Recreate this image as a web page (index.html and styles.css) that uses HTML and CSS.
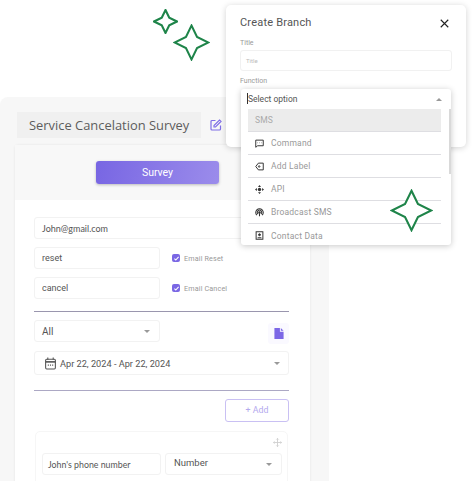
FILE: index.html
```html
<!DOCTYPE html>
<html lang="en">
<head>
    <meta charset="UTF-8">
    <title>Create Branch</title>
    <link rel="stylesheet" href="styles.css">
</head>
<body>
    <div id="stage">
        <!-- survey window -->
        <section class="survey_panel">
            <header class="survey_head">
                <h1>Service Cancelation Survey</h1>
                <svg class="edit_icon" viewBox="0 0 24 24" width="12" height="12" fill="none" stroke="#7f6ee6" stroke-width="2.4"><path d="M11 3H4a2 2 0 0 0-2 2v15a2 2 0 0 0 2 2h15a2 2 0 0 0 2-2v-7"/><path d="M19 2l3 3-11 11H8v-3z"/></svg>
            </header>
            <div class="survey_card">
                <div class="card_top"><a class="survey_btn" href="#">Survey</a></div>
                <div class="card_body">
                    <div class="field field_full poppins">John@gmail.com</div>
                    <div class="row">
                        <div class="field field_half">reset</div>
                        <label class="check"><span class="box"><svg viewBox="0 0 10 10" width="7" height="7" fill="none" stroke="#fff" stroke-width="1.6"><path d="M2 5.2l2 2 4-4.4"/></svg></span>Email Reset</label>
                    </div>
                    <div class="row">
                        <div class="field field_half">cancel</div>
                        <label class="check"><span class="box"><svg viewBox="0 0 10 10" width="7" height="7" fill="none" stroke="#fff" stroke-width="1.6"><path d="M2 5.2l2 2 4-4.4"/></svg></span>Email Cancel</label>
                    </div>
                    <hr class="line">
                    <div class="row row_between">
                        <div class="field field_half select_all">All<i class="caret"></i></div>
                        <div class="file_btn"><svg viewBox="0 0 20 24" fill="#7c67e6"><path d="M0 0h12v8h8v16H0zM14 0l6 6h-6z"/></svg></div>
                    </div>
                    <div class="field date_field">
                        <svg viewBox="0 0 24 24" width="13" height="13" fill="none" stroke="#555" stroke-width="2"><rect x="3" y="4" width="18" height="18" rx="2"/><path d="M3 9h18" stroke-width="3"/><path d="M7 1v4M17 1v4"/><path d="M7 15h2M11 15h2M15 15h2" /></svg>
                        <span>Apr 22, 2024 - Apr 22, 2024</span><i class="caret"></i>
                    </div>
                    <hr class="line line_2">
                    <div class="add_row"><a class="add_btn" href="#">+ Add</a></div>
                    <div class="sub_card">
                        <div class="move_row"><svg viewBox="0 0 24 24" width="9" height="9" fill="none" stroke="#cfcfcf" stroke-width="2.4"><path d="M12 1v22M1 12h22M9 4l3-3 3 3M9 20l3 3 3-3M4 9l-3 3 3 3M20 9l3 3-3 3"/></svg></div>
                        <div class="sub_row">
                            <div class="field phone_field poppins">John's phone number</div>
                            <div class="field number_field">Number<i class="caret"></i></div>
                        </div>
                    </div>
                </div>
            </div>
        </section>

        <!-- create branch modal -->
        <section class="modal">
            <header class="modal_head">
                <h2>Create Branch</h2>
                <svg viewBox="0 0 12 12" width="9" height="9" fill="none" stroke="#222" stroke-width="1.5"><path d="M1 1l10 10M11 1L1 11"/></svg>
            </header>
            <p class="modal_label">Title</p>
            <div class="modal_input">Title</div>
            <p class="modal_label label_fn">Function</p>
        </section>

        <!-- dropdown list -->
        <div class="dropdown">
            <div class="drop_head"><span class="cursor"></span>Select option<i class="caret caret_up"></i></div>
            <ul class="drop_list">
                <li class="on">SMS</li>
                <li><svg viewBox="0 0 24 24" width="9" height="9" fill="none" stroke="#333" stroke-width="2.6"><path d="M2 3h20v15H7l-5 4z"/><path d="M7 10h1M12 10h1M17 10h1"/></svg>Command</li>
                <li><svg viewBox="0 0 24 24" width="9" height="9" fill="none" stroke="#333" stroke-width="2.6"><path d="M2 12l7-9h13v18H9z"/><circle cx="11" cy="12" r="2"/></svg>Add Label</li>
                <li><svg viewBox="0 0 24 24" width="9" height="9" fill="#333"><path d="M12 0l4 5H8zM12 24l-4-5h8zM0 12l5-4v8zM24 12l-5 4V8z"/><circle cx="12" cy="12" r="4.5"/></svg>API</li>
                <li><svg viewBox="0 0 24 24" width="9" height="9" fill="none" stroke="#333" stroke-width="2.8"><path d="M5 19a10 10 0 1 1 14 0"/><path d="M8 16a6 6 0 1 1 8 0"/><circle cx="12" cy="12" r="2" fill="#333"/><path d="M12 14v8"/></svg>Broadcast SMS</li>
                <li class="last"><svg viewBox="0 0 24 24" width="9" height="9" fill="none" stroke="#333" stroke-width="2.6"><rect x="3" y="2" width="18" height="20"/><circle cx="12" cy="10" r="2.5" fill="#333"/><path d="M7 18h10" /></svg>Contact Data</li>
            </ul>
            <span class="scroll_thumb"></span>
        </div>

        <!-- stars -->
        <svg class="star star_1" viewBox="0 0 24 24" fill="#fff" stroke="#1e8449" stroke-width="2"><path d="M12 1l3.6 7.4L23 12l-7.4 3.6L12 23l-3.6-7.4L1 12l7.4-3.6z"/></svg>
        <svg class="star star_2" viewBox="0 0 24 24" fill="#fff" stroke="#1e8449" stroke-width="1.3"><path d="M12 1l3.6 7.4L23 12l-7.4 3.6L12 23l-3.6-7.4L1 12l7.4-3.6z"/></svg>
        <svg class="star star_3" viewBox="0 0 24 24" fill="#fff" stroke="#1e8449" stroke-width="1.15"><path d="M12 1l3.6 7.4L23 12l-7.4 3.6L12 23l-3.6-7.4L1 12l7.4-3.6z"/></svg>
    </div>
</body>
</html>
```

FILE: styles.css
```css
/* reset */
* {box-sizing: border-box;}
html, body {margin: 0; height: 100%; overflow: hidden; background: #fff;}
body {font-family: 'Roboto', 'Liberation Sans', sans-serif; color: #555;}
h1, h2, p, ul {margin: 0; padding: 0;}
li {list-style: none;}
a {text-decoration: none;}

#stage {
    position: relative;
    width: 475px;
    height: 481px;
    overflow: hidden;
}
.poppins {font-family: 'Lato', 'Open Sans', sans-serif;}

/* survey window */
.survey_panel {
    position: absolute;
    left: 0;
    top: 97px;
    width: 329px;
    height: 400px;
    padding: 15px 19px 0 15px;
    background: #f7f7f7;
    border-radius: 8px;
}
.survey_head {
    display: flex;
    align-items: center;
    margin-left: 2px;
    height: 26px;
}
.survey_head h1 {
    width: 184px;
    height: 26px;
    padding-left: 12px;
    background: #f0f0f0;
    font: 400 12.9px/26px 'Open Sans', 'Inter', sans-serif;
    white-space: nowrap;
    color: #5c5c5c;
}
.edit_icon {margin-left: 9px;}
.survey_card {
    margin-top: 7px;
    background: #fff;
    border-radius: 4px;
    box-shadow: 0 0 3px rgba(0, 0, 0, .08);
    height: 360px;
}
.card_top {
    display: flex;
    justify-content: center;
    height: 55px;
    padding: 16px 10px 0 0;
    background: #f8f8f8;
}
.survey_btn {
    width: 123px;
    height: 23px;
    border-radius: 3px;
    background: linear-gradient(100deg, #7866e3, #9b8ceb);
    box-shadow: 0 1px 3px rgba(0, 0, 0, .25);
    color: #fff;
    font-size: 10.5px;
    line-height: 23px;
    text-align: center;
}
.card_body {padding: 17px 21px 0 19px;}

/* fields */
.field {
    display: flex;
    align-items: center;
    position: relative;
    height: 22px;
    padding-left: 7px;
    background: #fff;
    border: 1px solid #f2f2f2;
    border-radius: 3px;
    font-size: 9px;
    color: #555;
}
.field_full {width: 255px; margin-bottom: 8px;}
.field_half {width: 126px;}
.row {display: flex; align-items: center; height: 22px; margin-bottom: 8px;}
.row_between {justify-content: space-between; align-items: flex-start; margin-bottom: 9px;}
.check {
    display: flex;
    align-items: center;
    margin-left: 12px;
    font-size: 7.2px;
    letter-spacing: .15px;
    color: #999;
}
.box {
    display: flex;
    align-items: center;
    justify-content: center;
    width: 8px;
    height: 8px;
    margin-right: 4px;
    border-radius: 2px;
    background: #7a67e4;
}
.line {
    height: 1px;
    margin: 12px 0 8px;
    border: 0;
    background: #9a96ae;
}
.line_2 {margin: 15px 0 8px; background: #aca8c4;}
.caret {
    position: absolute;
    right: 9px;
    top: 50%;
    margin-top: -1px;
    border-left: 3px solid transparent;
    border-right: 3px solid transparent;
    border-top: 3px solid #999;
}
.caret_up {border-top: 0; border-bottom: 3px solid #999;}
.select_all {font-size: 10px;}
.file_btn {
    display: flex;
    align-items: center;
    justify-content: center;
    width: 21px;
    height: 21px;
    margin-top: 3px;
    border-radius: 3px;
    background: #faf9ff;
}
.file_btn svg {width: 10px; height: 11px;}
.date_field {width: 255px; height: 24px; padding-left: 9px; font-size: 9.2px; gap: 3px;}
.date_field .caret {right: 8px;}
.add_row {display: flex; justify-content: flex-end; margin-bottom: 9px;}
.add_btn {
    width: 64px;
    height: 23px;
    border: 1px solid #c9c0f3;
    border-radius: 3px;
    color: #b4a9ee;
    font-size: 8.8px;
    line-height: 21px;
    text-align: center;
}
.sub_card {
    margin-left: 1px;
    width: 253px;
    height: 60px;
    padding: 0 5px 0 6px;
    border: 1px solid #f6f6f6;
    border-radius: 5px;
}
.move_row {display: flex; justify-content: flex-end; height: 21px; padding: 6px 0 0;}
.sub_row {display: flex; gap: 4px;}
.phone_field {width: 120px; padding-left: 5px; font-size: 8.8px;}
.number_field {width: 118px; padding: 0 0 3px 8px; font-size: 9.5px;}

/* modal */
.modal {
    position: absolute;
    left: 226px;
    top: 5px;
    width: 240px;
    height: 142px;
    padding: 11px 14px;
    background: #fff;
    border-radius: 5px;
    box-shadow: 0 1px 6px rgba(0, 0, 0, .18);
}
.modal_head {display: flex; align-items: center; justify-content: space-between; padding-right: 3px;}
.modal_head h2 {font-size: 11px; font-weight: 400; line-height: 14px; letter-spacing: .2px; color: #555;}
.modal_label {margin-top: 9px; font-size: 7px; line-height: 9px; color: #999;}
.modal_input {
    height: 21px;
    margin-top: 2px;
    padding-left: 5px;
    border: 1px solid #f1f1f1;
    border-radius: 3px;
    font-size: 6px;
    line-height: 19px;
    color: #bbb;
}
.label_fn {margin-top: 6px;}

/* dropdown */
.dropdown {
    position: absolute;
    left: 241px;
    top: 89px;
    width: 210px;
    height: 156px;
    background: #fff;
    border-radius: 3px;
    box-shadow: 0 1px 6px rgba(0, 0, 0, .22);
    overflow: hidden;
}
.drop_head {
    display: flex;
    align-items: center;
    position: relative;
    height: 20px;
    padding: 0 0 1px 6px;
    font-size: 8.5px;
    color: #555;
}
.cursor {width: 1px; height: 11px; margin-right: 0; background: #333;}
.drop_list {padding: 0 10px 0 7px;}
.drop_list li {
    display: flex;
    align-items: center;
    gap: 7px;
    height: 23px;
    padding-left: 7px;
    border-bottom: 1px solid #dedee2;
    font-size: 8.5px;
    letter-spacing: .2px;
    color: #999;
}
.drop_list li.on {background: #ececec; color: #aaa; padding-left: 7px;}
.drop_list li.last {border-bottom: 0;}
.scroll_thumb {
    position: absolute;
    right: 0;
    top: 20px;
    width: 2px;
    height: 65px;
    background: #d9d9d9;
}

/* stars */
.star {position: absolute;}
.star_1 {left: 153px; top: 9px; width: 25px; height: 25px;}
.star_2 {left: 173px; top: 24px; width: 37px; height: 37px;}
.star_3 {left: 390px; top: 189px; width: 43px; height: 43px;}
```
